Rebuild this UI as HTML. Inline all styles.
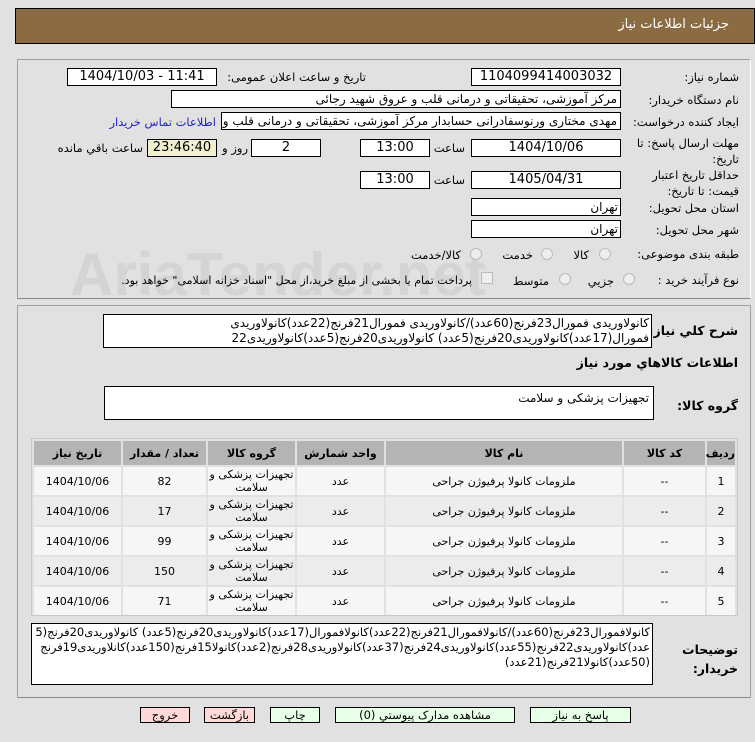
<!DOCTYPE html>
<html><head><meta charset="utf-8"><style>
*{box-sizing:border-box;margin:0;padding:0}
body{width:755px;height:742px;background:#e1e1e1;font-family:"DejaVu Sans","Liberation Sans",sans-serif;font-size:11.5px;color:#000;position:relative;overflow:hidden}
.a{position:absolute}
.box{position:absolute;background:#fff;border:1px solid #000;text-align:center;font-size:13px;line-height:16px;white-space:nowrap;overflow:hidden}
.lbl{position:absolute;direction:rtl;text-align:right;white-space:nowrap;font-size:11.5px}
.b{font-weight:bold}
.rad{position:absolute;width:12px;height:12px;border-radius:50%;border:1px solid #bbb;background:#eee}
table{border-collapse:separate;border-spacing:2px;direction:rtl}
td,th{text-align:center;font-size:11px;padding:0}
th{background:#b4b4b4;height:24px;font-weight:bold}
td{height:28px;line-height:13px}
tr.o td{background:#f6f6f6}
tr.e td{background:#ececec}
.btn{position:absolute;top:707px;height:16px;border:1px solid #000;text-align:center;font-size:11.5px;line-height:14px;direction:rtl}
</style></head><body>
<div class="a" style="left:15px;top:8px;width:740px;height:36px;background:#8b6c42;border:1px solid #000"></div>
<div class="lbl" style="right:26px;top:17px;color:#fff;font-size:13px">جزئیات اطلاعات نیاز</div>

<div class="a" style="left:17px;top:59px;width:734px;height:240px;border:1px solid #a0a0a0;border-right-color:#fff;border-bottom-color:#888"></div>
<div class="a" style="left:17px;top:305px;width:734px;height:393px;border:1px solid #a0a0a0;border-bottom-color:#888"></div>

<div class="a" style="left:70px;top:240px;font-size:60px;font-weight:bold;color:rgba(170,170,170,0.22);font-family:'Liberation Sans',sans-serif">AriaTender.net</div>

<div class="lbl" style="right:16px;top:70px">شماره نیاز:</div>
<div class="box" style="left:471px;top:68px;width:150px;height:18px">1104099414003032</div>
<div class="lbl" style="right:389px;top:70px">تاریخ و ساعت اعلان عمومی:</div>
<div class="box" style="left:67px;top:68px;width:150px;height:18px">1404/10/03 - 11:41</div>

<div class="lbl" style="right:16px;top:93px">نام دستگاه خریدار:</div>
<div class="box" style="left:171px;top:90px;width:450px;height:18px;text-align:right;direction:rtl;padding-right:3px;font-size:12px">مرکز آموزشی، تحقیقاتی و درمانی قلب و عروق شهید رجائی</div>

<div class="lbl" style="right:16px;top:115px">ایجاد کننده درخواست:</div>
<div class="box" style="left:221px;top:112px;width:400px;height:18px;text-align:right;direction:rtl;padding-right:3px;font-size:12px">مهدی مختاری ورنوسفادرانی حسابدار مرکز آموزشی، تحقیقاتی و درمانی قلب و عروق</div>
<div class="lbl" style="right:539px;top:115px;color:#2222cc;font-size:11.5px">اطلاعات تماس خریدار</div>

<div class="lbl" style="right:16px;top:135px;line-height:16px;text-align:right">مهلت ارسال پاسخ: تا<br>تاریخ:</div>
<div class="box" style="left:471px;top:139px;width:150px;height:18px">1404/10/06</div>
<div class="lbl" style="right:290px;top:141px">ساعت</div>
<div class="box" style="left:360px;top:139px;width:70px;height:18px">13:00</div>
<div class="box" style="left:251px;top:139px;width:70px;height:18px">2</div>
<div class="lbl" style="right:507px;top:141px">روز و</div>
<div class="box" style="left:147px;top:139px;width:70px;height:18px;background:#f0f0d0">23:46:40</div>
<div class="lbl" style="right:612px;top:141px">ساعت باقي مانده</div>

<div class="lbl" style="right:16px;top:167px;line-height:16px">حداقل تاریخ اعتبار<br>قیمت: تا تاریخ:</div>
<div class="box" style="left:471px;top:171px;width:150px;height:18px">1405/04/31</div>
<div class="lbl" style="right:290px;top:173px">ساعت</div>
<div class="box" style="left:360px;top:171px;width:70px;height:18px">13:00</div>

<div class="lbl" style="right:16px;top:201px">استان محل تحویل:</div>
<div class="box" style="left:471px;top:198px;width:150px;height:18px;text-align:right;padding-right:2px;font-size:12px">تهران</div>
<div class="lbl" style="right:16px;top:223px">شهر محل تحویل:</div>
<div class="box" style="left:471px;top:220px;width:150px;height:18px;text-align:right;padding-right:2px;font-size:12px">تهران</div>

<div class="lbl" style="right:16px;top:247px">طبقه بندی موضوعی:</div>
<div class="rad" style="left:599px;top:248px"></div><div class="lbl" style="right:166px;top:248px">کالا</div>
<div class="rad" style="left:541px;top:248px"></div><div class="lbl" style="right:222px;top:248px">خدمت</div>
<div class="rad" style="left:470px;top:248px"></div><div class="lbl" style="right:294px;top:248px">کالا/خدمت</div>

<div class="lbl" style="right:16px;top:273px">نوع فرآیند خرید :</div>
<div class="rad" style="left:623px;top:273px"></div><div class="lbl" style="right:141px;top:274px">جزيي</div>
<div class="rad" style="left:559px;top:273px"></div><div class="lbl" style="right:206px;top:274px">متوسط</div>
<div class="a" style="left:481px;top:272px;width:12px;height:12px;border:1px solid #bbb;background:#eee"></div>
<div class="lbl" style="right:283px;top:274px;font-size:11px">پرداخت تمام یا بخشی از مبلغ خرید،از محل "اسناد خزانه اسلامی" خواهد بود.</div>

<div class="lbl b" style="right:17px;top:323px;font-size:12.5px">شرح کلي نياز:</div>
<div class="box" style="left:103px;top:314px;width:549px;height:34px;text-align:right;direction:rtl;white-space:normal;padding:1px 2px;line-height:15px;font-size:12px">کانولاوریدی فمورال23فرنج(60عدد)/کانولاوریدی فمورال21فرنج(22عدد)کانولاوریدی فمورال(17عدد)کانولاوریدی20فرنج(5عدد) کانولاوریدی20فرنج(5عدد)کانولاوریدی22</div>
<div class="lbl b" style="right:17px;top:355px;font-size:12.5px">اطلاعات کالاهاي مورد نياز</div>

<div class="lbl b" style="right:17px;top:398px;font-size:12.5px">گروه کالا:</div>
<div class="box" style="left:104px;top:386px;width:550px;height:34px;text-align:right;direction:rtl;padding:3px 4px;font-size:12px">تجهیزات پزشکی و سلامت</div>

<div class="a" style="left:31px;top:438px;width:707px;height:178px;border:1px solid #c8c8c8">
<table style="width:705px;table-layout:fixed">
<tr><th style="width:28px">رديف</th><th style="width:81px">کد کالا</th><th style="width:236px">نام کالا</th><th style="width:87px">واحد شمارش</th><th style="width:87px">گروه کالا</th><th style="width:83px">تعداد / مقدار</th><th>تاریخ نیاز</th></tr>
<tr class="o"><td>1</td><td>--</td><td>ملزومات کانولا پرفیوژن جراحی</td><td>عدد</td><td>تجهیزات پزشکی و سلامت</td><td>82</td><td>1404/10/06</td></tr>
<tr class="e"><td>2</td><td>--</td><td>ملزومات کانولا پرفیوژن جراحی</td><td>عدد</td><td>تجهیزات پزشکی و سلامت</td><td>17</td><td>1404/10/06</td></tr>
<tr class="o"><td>3</td><td>--</td><td>ملزومات کانولا پرفیوژن جراحی</td><td>عدد</td><td>تجهیزات پزشکی و سلامت</td><td>99</td><td>1404/10/06</td></tr>
<tr class="e"><td>4</td><td>--</td><td>ملزومات کانولا پرفیوژن جراحی</td><td>عدد</td><td>تجهیزات پزشکی و سلامت</td><td>150</td><td>1404/10/06</td></tr>
<tr class="o"><td>5</td><td>--</td><td>ملزومات کانولا پرفیوژن جراحی</td><td>عدد</td><td>تجهیزات پزشکی و سلامت</td><td>71</td><td>1404/10/06</td></tr>
</table></div>

<div class="lbl b" style="right:17px;top:640px;line-height:19px;font-size:12.5px">توضیحات<br>خریدار:</div>
<div class="box" style="left:31px;top:623px;width:622px;height:62px;text-align:right;direction:rtl;white-space:normal;word-break:break-all;padding:1px 2px;line-height:15px;font-size:11.5px">کانولافمورال23فرنج(60عدد)/کانولافمورال21فرنج(22عدد)کانولافمورال(17عدد)کانولاوریدی20فرنج(5عدد) کانولاوریدی20فرنج(5عدد)کانولاوریدی22فرنج(55عدد)کانولاوریدی24فرنج(37عدد)کانولاوریدی28فرنج(2عدد)کانولا15فرنج(150عدد)کانلاوریدی19فرنج(50عدد)کانولا21فرنج(21عدد)</div>

<div class="btn" style="left:140px;width:50px;background:#ffd8d8">خروج</div>
<div class="btn" style="left:204px;width:51px;background:#ffd8d8">بازگشت</div>
<div class="btn" style="left:270px;width:50px;background:#e8ffe8">چاپ</div>
<div class="btn" style="left:335px;width:180px;background:#e8ffe8">مشاهده مدارک پیوستي (0)</div>
<div class="btn" style="left:530px;width:101px;background:#e8ffe8">پاسخ به نیاز</div>
</body></html>
